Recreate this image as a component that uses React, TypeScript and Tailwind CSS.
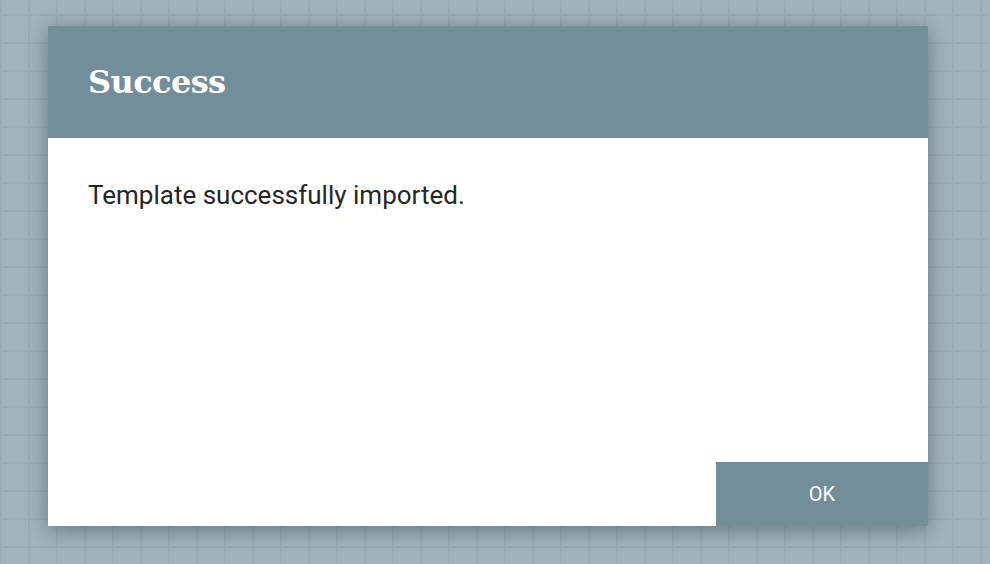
export default function App() {
  return (
    <div className="w-full h-[564px] overflow-hidden bg-[#a2b3bd] bg-[linear-gradient(to_right,#9aabb5_2px,transparent_2px),linear-gradient(to_bottom,#9aabb5_2px,transparent_2px)] bg-[size:28px_28px] bg-[position:0px_14px] pt-[26px] pl-[48px]">
      {/* dialog */}
      <div className="w-[880px] h-[500px] bg-white flex flex-col shadow-[0_4px_20px_rgba(0,0,0,0.35)]">
        <div className="h-[112px] bg-[#728e9a] px-[40px] flex items-center">
          <h1 className="text-white text-[32px] font-bold font-['DejaVu_Serif',serif] tracking-[-0.6px]">Success</h1>
        </div>
        <div className="flex-1 px-[40px] pt-[42px]">
          <p className="text-[26px] leading-[30px] text-[#262626] font-['Roboto',sans-serif]">
            Template successfully imported.
          </p>
        </div>
        <div className="flex justify-end">
          <button className="w-[212px] h-[64px] bg-[#728e9a] text-white text-[20px] font-['Roboto',sans-serif]">
            OK
          </button>
        </div>
      </div>
    </div>
  );
}
